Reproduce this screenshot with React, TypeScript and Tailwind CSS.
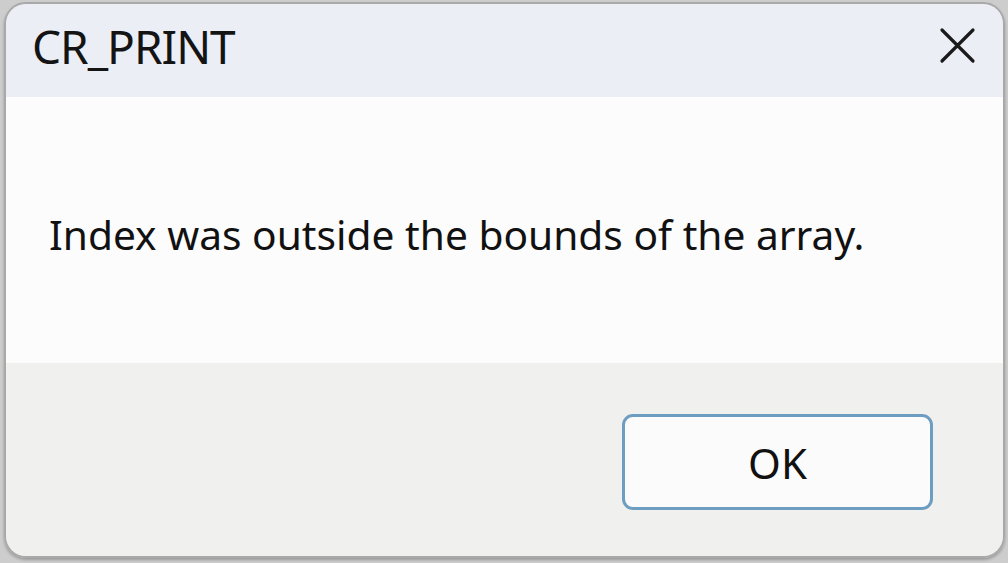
export default function App() {
    return (
        <div className="w-[1008px] h-[563px] bg-[#cdcdcd] pl-[4px] pt-[2px] pr-[3px] pb-[5px] font-['Noto_Sans',sans-serif]">
            <div className="h-full rounded-[22px] border-2 border-[#a9a9a9] overflow-hidden flex flex-col shadow-[0_2px_3px_rgba(0,0,0,0.25)]">
                <div className="h-[93px] bg-[#eceef6] flex items-center justify-between pl-[26px] pr-[27px]">
                    <h1 className="text-[46px] leading-none text-[#141414] tracking-[-1px] mb-[9px]">CR_PRINT</h1>
                    <svg width="37" height="37" viewBox="0 0 37 37" className="mb-[10px]">
                        <path d="M3 3 L34 34 M34 3 L3 34" stroke="#1a1a1a" strokeWidth="3.2" strokeLinecap="round" />
                    </svg>
                </div>
                <div className="h-[266px] bg-[#fcfcfc] flex items-center pl-[43px]">
                    <p className="text-[40.7px] leading-none text-[#111111] mt-[8px]">Index was outside the bounds of the array.</p>
                </div>
                <div className="flex-1 bg-[#f0f0ee] flex justify-end items-start pt-[51px] pr-[70px]">
                    <button className="w-[311px] h-[96px] rounded-[11px] border-[3px] border-[#6d9dc1] bg-[#fbfbfb] text-[42px] text-[#111111] flex items-center justify-center">
                        OK
                    </button>
                </div>
            </div>
        </div>
    )
}
